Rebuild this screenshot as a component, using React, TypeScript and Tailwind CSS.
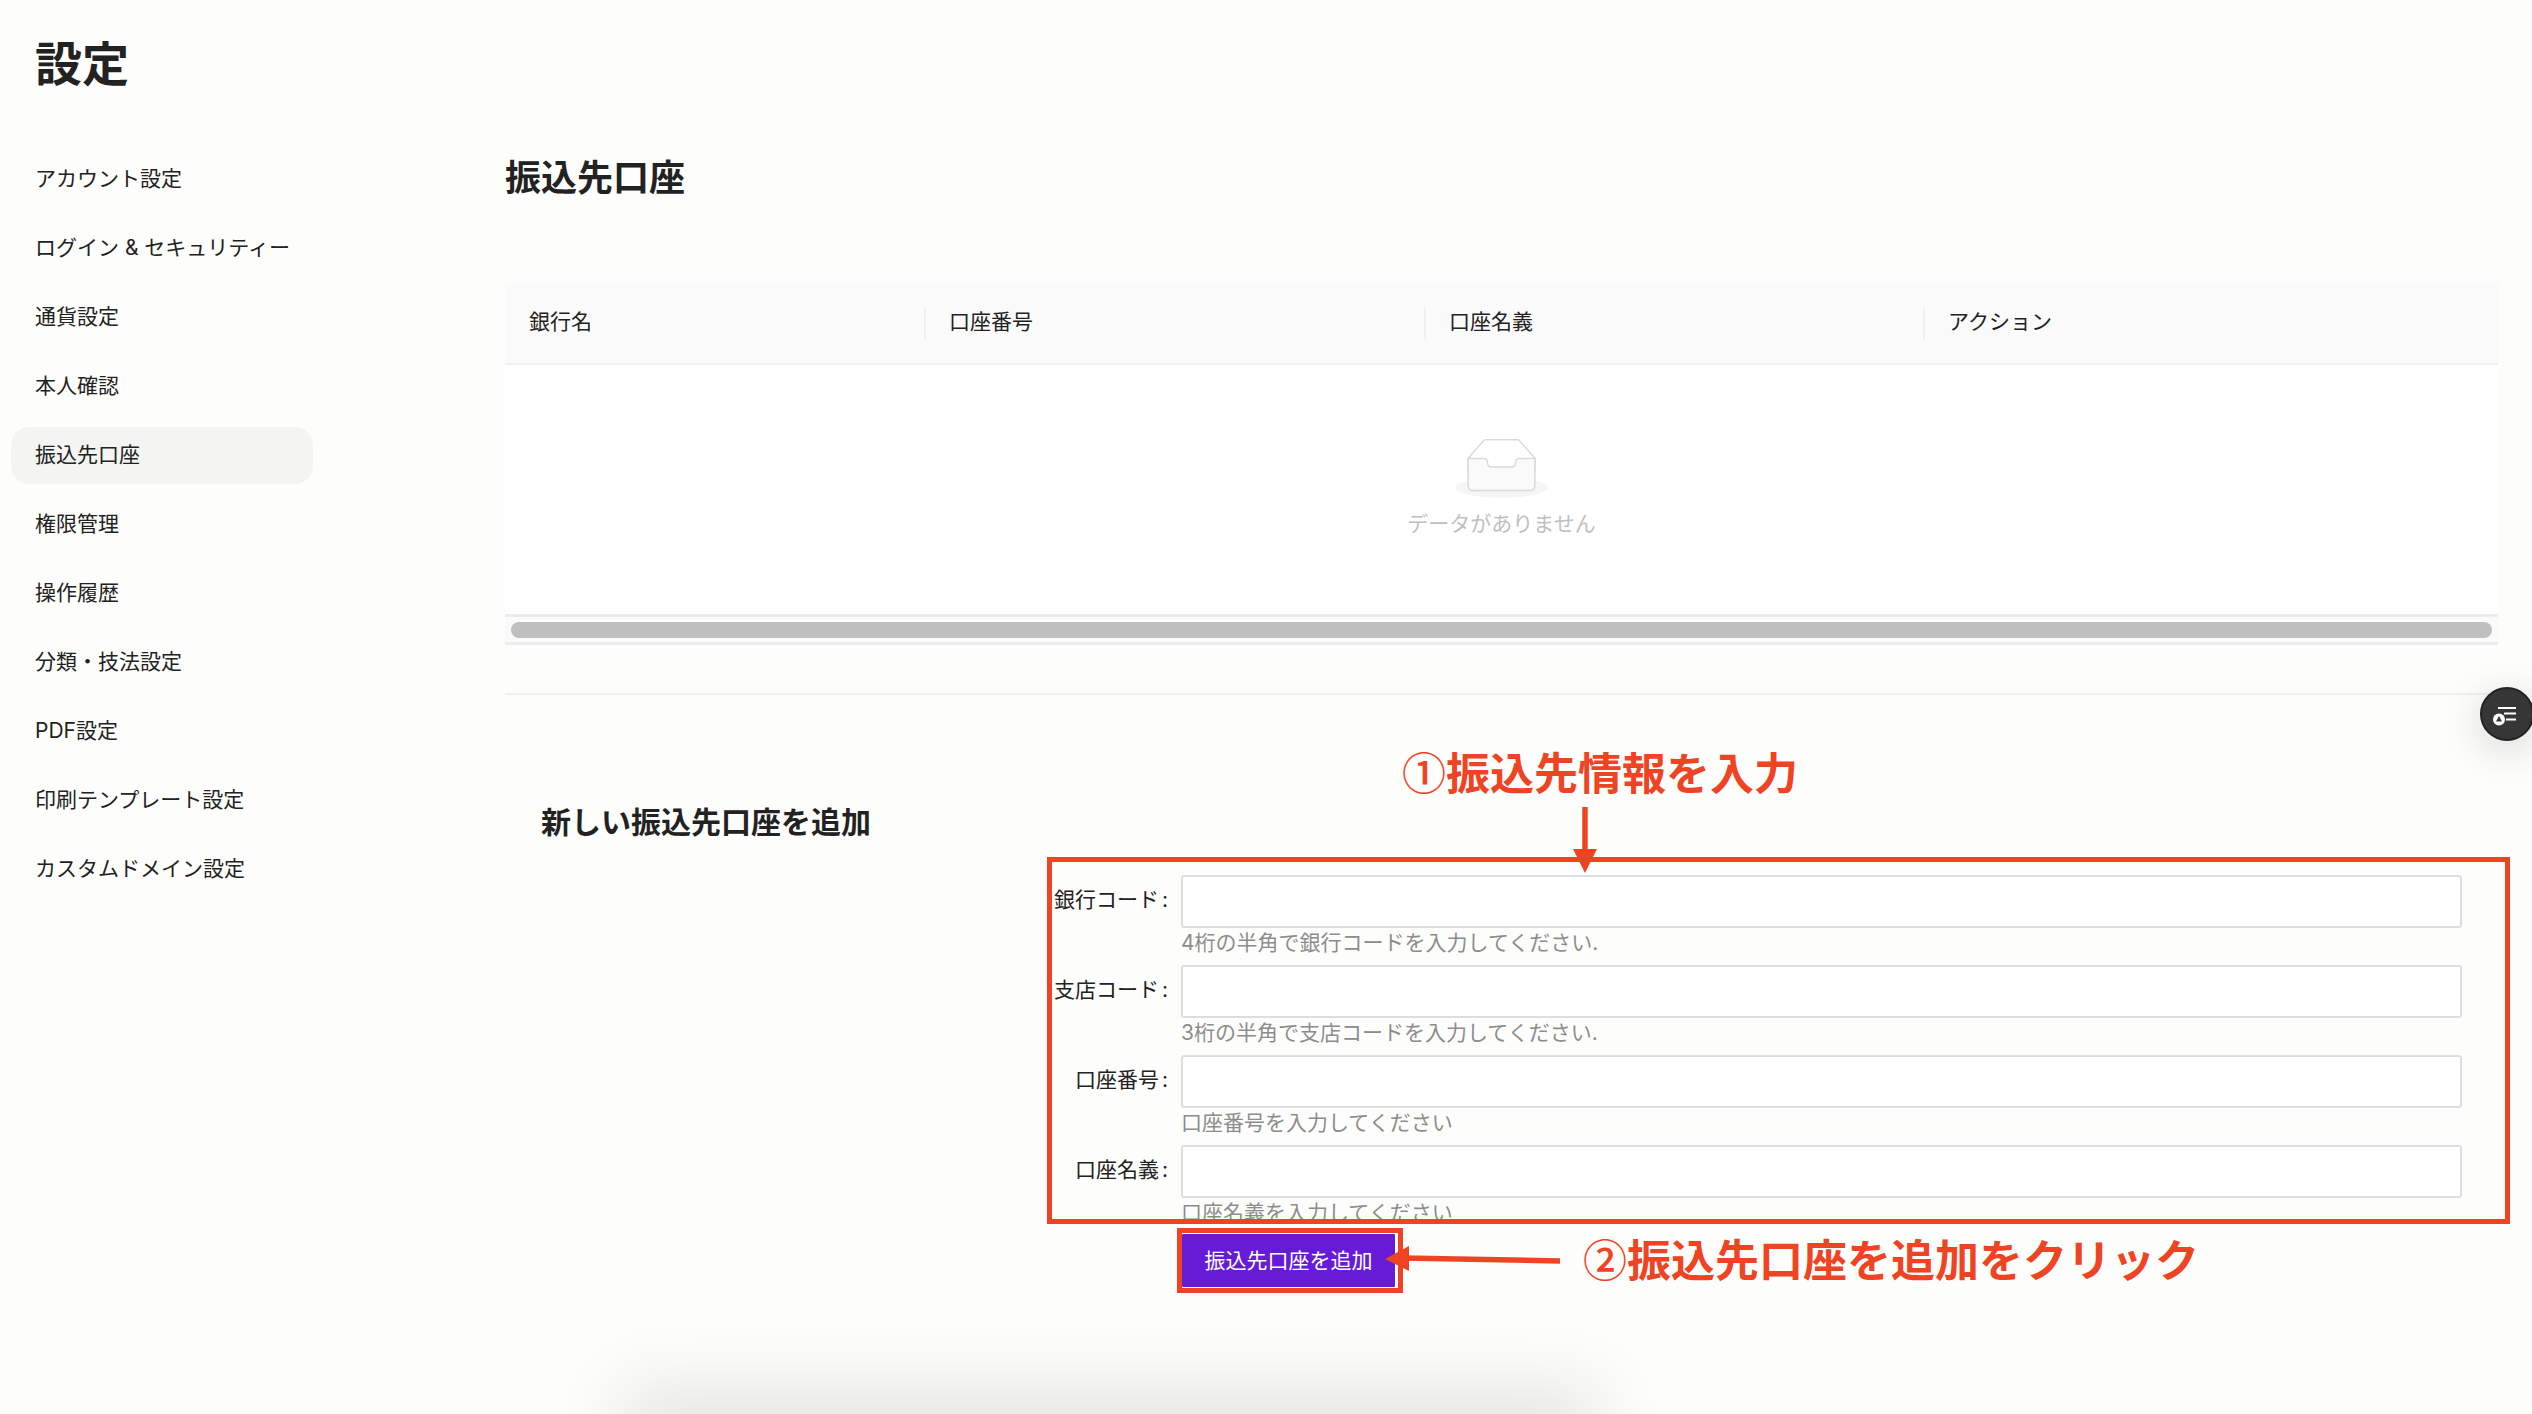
const navItems = [
  "アカウント設定",
  "ログイン & セキュリティー",
  "通貨設定",
  "本人確認",
  "振込先口座",
  "権限管理",
  "操作履歴",
  "分類・技法設定",
  "PDF設定",
  "印刷テンプレート設定",
  "カスタムドメイン設定",
];

const columns = ["口座番号", "口座名義", "アクション"];

const fields = [
  { label: "銀行コード", help: "4桁の半角で銀行コードを入力してください." },
  { label: "支店コード", help: "3桁の半角で支店コードを入力してください." },
  { label: "口座番号", help: "口座番号を入力してください" },
  { label: "口座名義", help: "口座名義を入力してください" },
];

const EmptyIcon = () => (
  <svg width="93" height="60" viewBox="0 0 64 41">
    <g transform="translate(0 1)" fill="none" fillRule="evenodd">
      <ellipse fill="#f5f5f5" cx="32" cy="33" rx="32" ry="7" />
      <g fillRule="nonzero" stroke="#d9d9d9">
        <path d="M55 12.76L44.854 1.258C44.367.474 43.656 0 42.907 0H21.093c-.749 0-1.46.474-1.947 1.257L9 12.761V22h46v-9.24z" />
        <path
          d="M41.613 15.931c0-1.605.994-2.93 2.227-2.931H55v18.137C55 33.26 53.68 35 52.05 35h-40.1C10.32 35 9 33.259 9 31.137V13h11.16c1.233 0 2.227 1.323 2.227 2.928v.022c0 1.605 1.005 2.901 2.237 2.901h14.752c1.232 0 2.237-1.308 2.237-2.913v-.007z"
          fill="#fafafa"
        />
      </g>
    </g>
  </svg>
);

const App = () => {
  return (
    <div className="relative flex h-[1414px] w-[2532px] overflow-hidden bg-[#fdfdfb] font-['Inter','Noto_Sans_CJK_JP',sans-serif] text-[21px] text-[#222222]">
      {/* Sidebar */}
      <aside className="w-[505px] shrink-0 pl-[11px]">
        <h1 className="ml-[24px] mt-[32px] h-[64px] text-[47px] font-bold leading-[64px]">設定</h1>
        <nav className="mt-[55px] flex w-[302px] flex-col gap-[12px]">
          {navItems.map((item) => (
            <div
              key={item}
              className={`h-[57px] rounded-[18px] pl-[24px] leading-[55px] ${item === "振込先口座" ? "bg-[#f4f5f3]" : ""}`}
            >
              {item}
            </div>
          ))}
        </nav>
      </aside>

      {/* Main */}
      <main className="w-[1993px] shrink-0">
        <h2 className="mt-[153px] h-[50px] text-[36px] font-bold leading-[50px]">振込先口座</h2>

        {/* Table */}
        <div className="mt-[80px]">
          <div className="grid h-[82px] grid-cols-[419px_500px_499px_1fr] items-center border-b-2 border-[#f0f0f0] bg-[#fafafa]">
            <div className="h-[33px] pl-[24px] leading-[29px]">銀行名</div>
            {columns.map((col) => (
              <div key={col} className="h-[33px] border-l-2 border-[#f0f0f0] pl-[23px] leading-[29px]">
                {col}
              </div>
            ))}
          </div>
          <div className="flex h-[249px] flex-col items-center bg-white pt-[73px]">
            <EmptyIcon />
            <p className="mt-[10px] text-[#bfbfbf]">データがありません</p>
          </div>
          <div className="h-[31px] border-y-[3px] border-[#ececec] bg-[#fafafa] px-[6px] pt-[5px]">
            <div className="h-[16px] rounded-full bg-[#bfbfbf]" />
          </div>
        </div>
        <div className="mt-[48px] h-[2px] bg-[#f0f0f0]" />

        {/* Add form */}
        <h3 className="ml-[36px] mt-[106px] h-[42px] text-[30px] font-bold leading-[42px]">新しい振込先口座を追加</h3>
        <form className="ml-[541px] mt-[32px] w-[1416px]">
          <div className="flex flex-col gap-[7px]">
            {fields.map((field) => (
              <div key={field.label} className="flex gap-[13px]">
                <label className="h-[53px] w-[122px] shrink-0 whitespace-nowrap text-right leading-[50px]">
                  {field.label}
                  <span className="ml-[3px]">:</span>
                </label>
                <div className="flex-1">
                  <input className="block h-[53px] w-full rounded-[3px] border-2 border-[#dedede] bg-white" />
                  <p className="h-[30px] leading-[30px] text-[#8c8c8c]">{field.help}</p>
                </div>
              </div>
            ))}
          </div>
          <button
            type="button"
            className="ml-[135px] mt-[5px] h-[55px] w-[215px] rounded-[2px] border border-white bg-[#661bd6] text-white"
          >
            振込先口座を追加
          </button>
        </form>
      </main>

      {/* Floating button */}
      <div className="absolute left-[2480px] top-[687px] flex h-[54px] w-[54px] items-center justify-center rounded-full border-2 border-[#222222] bg-[#363636] shadow-[0_8px_40px_rgba(0,0,0,0.16)]">
        <svg width="54" height="54" viewBox="0 0 54 54" className="shrink-0">
          <path d="M18 21h18M24 26.5h12M26 32.5h10" stroke="#ffffff" strokeWidth="1.8" fill="none" />
          <circle cx="19" cy="32.5" r="6" fill="#ffffff" />
          <path d="M19 29l3 5.5h-6z" fill="#363636" />
        </svg>
      </div>

      {/* Bottom shadow from the element under the fold */}
      <div className="absolute left-[650px] top-[1414px] h-[100px] w-[920px] shadow-[0_0_70px_30px_rgba(0,0,0,0.09)]" />

      {/* Annotations */}
      <div className="absolute left-[1047px] top-[857px] h-[367px] w-[1463px] border-[5px] border-[#ef4423]" />
      <div className="absolute left-[1177px] top-[1228px] h-[65px] w-[226px] border-[5px] border-[#ef4423]" />
      <div className="absolute left-[1402px] top-[740px] whitespace-nowrap text-[44px] font-bold leading-[62px] text-[#ef4423]">
        <span className="font-['Noto_Sans_CJK_JP',sans-serif] font-medium">①</span>振込先情報を入力
      </div>
      <div className="absolute left-[1583px] top-[1227px] whitespace-nowrap text-[44px] font-bold leading-[62px] text-[#ef4423]">
        <span className="font-['Noto_Sans_CJK_JP',sans-serif] font-medium">②</span>振込先口座を追加をクリック
      </div>
      <svg className="absolute left-[1570px] top-[805px]" width="30" height="70" viewBox="0 0 30 70">
        <path d="M15 2v46" stroke="#ef4423" strokeWidth="5.5" />
        <path d="M3 44h24L15 68z" fill="#ef4423" />
      </svg>
      <svg className="absolute left-[1383px] top-[1244px]" width="180" height="30" viewBox="0 0 180 30">
        <path d="M20 14l157 3" stroke="#ef4423" strokeWidth="5.5" />
        <path d="M2 15L26 2v25z" fill="#ef4423" />
      </svg>
    </div>
  );
};

export default App;
